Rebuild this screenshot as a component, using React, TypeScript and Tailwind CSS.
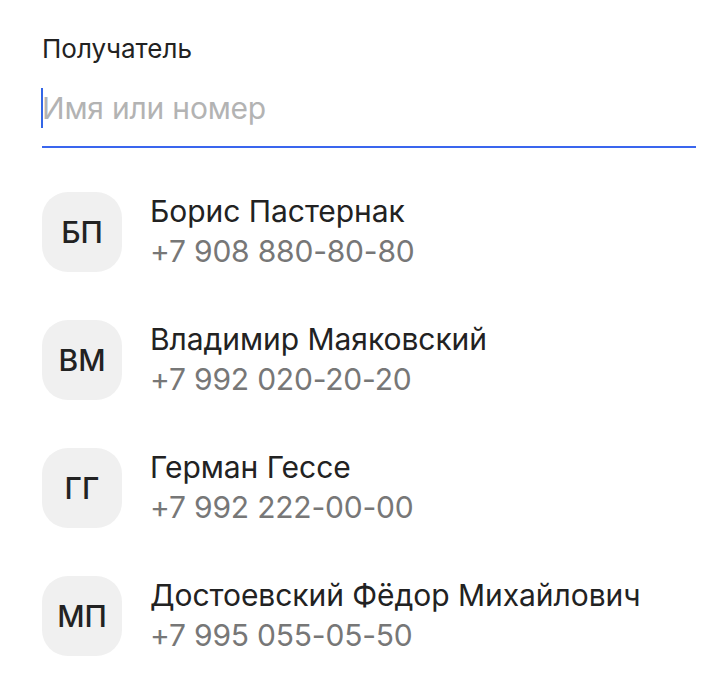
import React from "react";

const contacts = [
  { initials: "БП", name: "Борис Пастернак", phone: "+7 908 880-80-80" },
  { initials: "ВМ", name: "Владимир Маяковский", phone: "+7 992 020-20-20" },
  { initials: "ГГ", name: "Герман Гессе", phone: "+7 992 222-00-00" },
  { initials: "МП", name: "Достоевский Фёдор Михайлович", phone: "+7 995 055-05-50" },
];

export default function App() {
  return (
    <div
      className="w-[728px] h-[698px] bg-white pl-[42px] pr-[32px] pt-[33px]"
      style={{ fontFamily: "Inter, 'Noto Sans', sans-serif" }}
    >
      <div className="text-[26px] leading-[32px] text-[#222222]">Получатель</div>
      <div className="mt-[23px] flex items-center h-[40px] relative">
        <div className="absolute left-[-1px] top-0 w-[2px] h-[40px] bg-[#3366e6]" />
        <span className="text-[30px] text-[#b3b3b3] leading-[40px] tracking-[-0.2px]">Имя или номер</span>
      </div>
      <div className="mt-[18px] h-[2px] bg-[#3a66ee]" />
      <div className="pt-[44px] flex flex-col gap-[48px]">
        {contacts.map((c) => (
          <div key={c.initials} className="flex items-center h-[80px]">
            <div className="w-[80px] h-[80px] rounded-[26px] bg-[#f0f0f0] flex items-center justify-center text-[30px] font-medium text-[#222222] leading-none">
              {c.initials}
            </div>
            <div className="ml-[28px] flex flex-col -mt-[2px]">
              <div className="text-[30px] leading-[40px] text-[#222222] tracking-[-0.05px]">{c.name}</div>
              <div className="text-[30px] leading-[41px] text-[#777777] tracking-[-0.2px]">{c.phone}</div>
            </div>
          </div>
        ))}
      </div>
    </div>
  );
}
